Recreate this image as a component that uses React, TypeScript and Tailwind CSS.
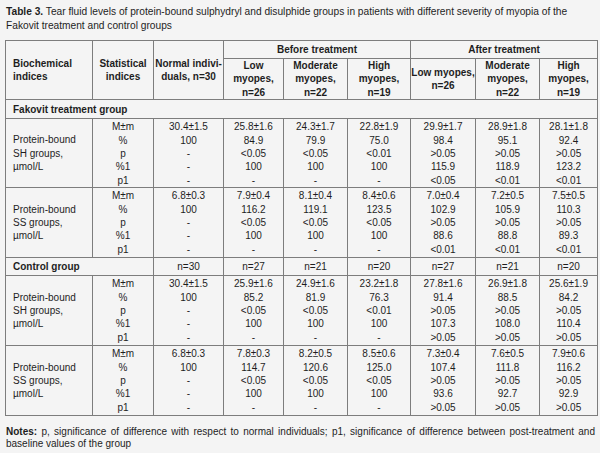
import React from "react";

const font = { fontFamily: '"Liberation Sans", Arial, sans-serif' };

type Block = { label: string[]; rows: string[][] };

const stats = ["M±m", "%", "p", "%1", "p1"];

const fakovit: Block[] = [
  {
    label: ["Protein-bound", "SH groups,", "µmol/L"],
    rows: [
      ["30.4±1.5", "100", "-", "-", "-"],
      ["25.8±1.6", "84.9", "<0.05", "100", "-"],
      ["24.3±1.7", "79.9", "<0.05", "100", "-"],
      ["22.8±1.9", "75.0", "<0.01", "100", "-"],
      ["29.9±1.7", "98.4", ">0.05", "115.9", "<0.05"],
      ["28.9±1.8", "95.1", ">0.05", "118.9", "<0.01"],
      ["28.1±1.8", "92.4", ">0.05", "123.2", "<0.01"],
    ],
  },
  {
    label: ["Protein-bound", "SS groups,", "µmol/L"],
    rows: [
      ["6.8±0.3", "100", "-", "-", "-"],
      ["7.9±0.4", "116.2", "<0.05", "100", "-"],
      ["8.1±0.4", "119.1", "<0.05", "100", "-"],
      ["8.4±0.6", "123.5", "<0.05", "100", "-"],
      ["7.0±0.4", "102.9", ">0.05", "88.6", "<0.01"],
      ["7.2±0.5", "105.9", ">0.05", "88.8", "<0.01"],
      ["7.5±0.5", "110.3", ">0.05", "89.3", "<0.01"],
    ],
  },
];

const control: Block[] = [
  {
    label: ["Protein-bound", "SH groups,", "µmol/L"],
    rows: [
      ["30.4±1.5", "100", "-", "-", "-"],
      ["25.9±1.6", "85.2", "<0.05", "100", "-"],
      ["24.9±1.6", "81.9", "<0.05", "100", "-"],
      ["23.2±1.8", "76.3", "<0.01", "100", "-"],
      ["27.8±1.6", "91.4", ">0.05", "107.3", ">0.05"],
      ["26.9±1.8", "88.5", ">0.05", "108.0", ">0.05"],
      ["25.6±1.9", "84.2", ">0.05", "110.4", ">0.05"],
    ],
  },
  {
    label: ["Protein-bound", "SS groups,", "µmol/L"],
    rows: [
      ["6.8±0.3", "100", "-", "-", "-"],
      ["7.8±0.3", "114.7", "<0.05", "100", "-"],
      ["8.2±0.5", "120.6", "<0.05", "100", "-"],
      ["8.5±0.6", "125.0", "<0.05", "100", "-"],
      ["7.3±0.4", "107.4", ">0.05", "93.6", ">0.05"],
      ["7.6±0.5", "111.8", ">0.05", "92.7", ">0.05"],
      ["7.9±0.6", "116.2", ">0.05", "92.9", ">0.05"],
    ],
  },
];

const cell = "border border-[#7d7d7d] p-0";

function BlockRow({ b, h }: { b: Block; h: string }) {
  return (
    <tr className={h}>
      <td className={`${cell} align-middle pl-[7px] text-left`}>
        {b.label.map((l) => (
          <div key={l}>{l}</div>
        ))}
      </td>
      <td className={`${cell} align-top text-center pt-[1px]`}>
        {stats.map((s) => (
          <div key={s}>{s}</div>
        ))}
      </td>
      {b.rows.map((col, i) => (
        <td key={i} className={`${cell} align-top text-center pt-[1px]`}>
          {col.map((v, j) => (
            <div key={j}>{v}</div>
          ))}
        </td>
      ))}
    </tr>
  );
}

export default function App() {
  return (
    <div
      className="w-[600px] h-[453px] bg-[#f4f4f4] text-[#1e1e1e] text-[10px] leading-[13.4px] px-[5px] pt-[5px]"
      style={font}
    >
      <p className="pl-[1px] pr-[20px] text-[10.2px] leading-[13.5px]">
        <b>Table 3.</b> Tear fluid levels of protein-bound sulphydryl and disulphide groups in
        patients with different severity of myopia of the Fakovit treatment and control groups
      </p>
      <table className="mt-[8px] w-[592px] table-fixed border-collapse">
        <colgroup>
          <col className="w-[87px]" />
          <col className="w-[61px]" />
          <col className="w-[70px]" />
          <col className="w-[60px]" />
          <col className="w-[64px]" />
          <col className="w-[63px]" />
          <col className="w-[65px]" />
          <col className="w-[64px]" />
          <col className="w-[58px]" />
        </colgroup>
        <thead className="font-bold">
          <tr className="h-[18px]">
            <td rowSpan={2} className={`${cell} align-middle text-left pl-[7px]`}>
              Biochemical
              <br />
              indices
            </td>
            <td rowSpan={2} className={`${cell} align-middle text-center`}>
              Statistical
              <br />
              indices
            </td>
            <td rowSpan={2} className={`${cell} align-middle text-center`}>
              Normal indivi-
              <br />
              duals, n=30
            </td>
            <td colSpan={3} className={`${cell} text-center`}>
              Before treatment
            </td>
            <td colSpan={3} className={`${cell} text-center`}>
              After treatment
            </td>
          </tr>
          <tr className="h-[39px]">
            <td className={`${cell} text-center`}>
              Low
              <br />
              myopes,
              <br />
              n=26
            </td>
            <td className={`${cell} text-center`}>
              Moderate
              <br />
              myopes,
              <br />
              n=22
            </td>
            <td className={`${cell} text-center`}>
              High
              <br />
              myopes,
              <br />
              n=19
            </td>
            <td className={`${cell} text-center`}>
              Low myopes,
              <br />
              n=26
            </td>
            <td className={`${cell} text-center`}>
              Moderate
              <br />
              myopes,
              <br />
              n=22
            </td>
            <td className={`${cell} text-center`}>
              High
              <br />
              myopes,
              <br />
              n=19
            </td>
          </tr>
        </thead>
        <tbody>
          <tr className="h-[19px]">
            <td colSpan={9} className={`${cell} font-bold text-left pl-[7px]`}>
              Fakovit treatment group
            </td>
          </tr>
          <BlockRow b={fakovit[0]} h="h-[68px]" />
          <BlockRow b={fakovit[1]} h="h-[70px]" />
          <tr className="h-[18px]">
            <td colSpan={2} className={`${cell} font-bold text-left pl-[7px]`}>
              Control group
            </td>
            {["n=30", "n=27", "n=21", "n=20", "n=27", "n=21", "n=20"].map((n, i) => (
              <td key={i} className={`${cell} text-center`}>
                {n}
              </td>
            ))}
          </tr>
          <BlockRow b={control[0]} h="h-[70px]" />
          <BlockRow b={control[1]} h="h-[70px]" />
        </tbody>
      </table>
      <p className="mt-[10px] pl-[1px] text-justify leading-[12px]">
        <b>Notes:</b> p, significance of difference with respect to normal individuals; p1,
        significance of difference between post-treatment and baseline values of the group
      </p>
    </div>
  );
}
